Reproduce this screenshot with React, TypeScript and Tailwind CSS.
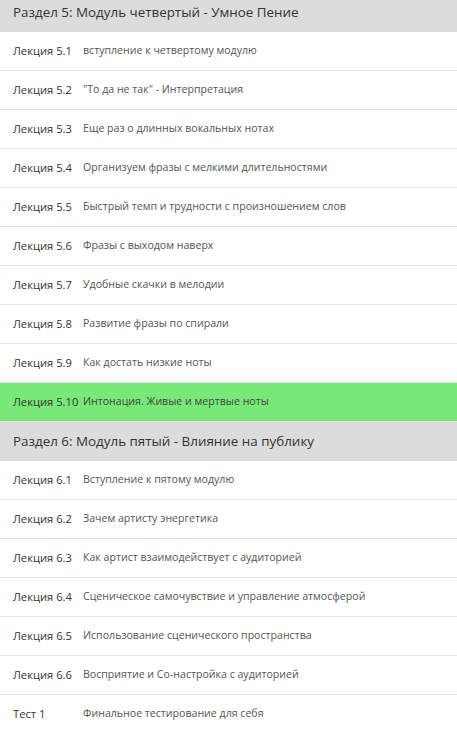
import React from 'react';

type Lesson = { label: string; title: string; active?: boolean };
type Section = { title: string; lessons: Lesson[] };

const sections: Section[] = [
  {
    title: 'Раздел 5: Модуль четвертый - Умное Пение',
    lessons: [
      { label: 'Лекция 5.1', title: 'вступление к четвертому модулю' },
      { label: 'Лекция 5.2', title: '"То да не так" - Интерпретация' },
      { label: 'Лекция 5.3', title: 'Еще раз о длинных вокальных нотах' },
      { label: 'Лекция 5.4', title: 'Организуем фразы с мелкими длительностями' },
      { label: 'Лекция 5.5', title: 'Быстрый темп и трудности с произношением слов' },
      { label: 'Лекция 5.6', title: 'Фразы с выходом наверх' },
      { label: 'Лекция 5.7', title: 'Удобные скачки в мелодии' },
      { label: 'Лекция 5.8', title: 'Развитие фразы по спирали' },
      { label: 'Лекция 5.9', title: 'Как достать низкие ноты' },
      { label: 'Лекция 5.10', title: 'Интонация. Живые и мертвые ноты', active: true },
    ],
  },
  {
    title: 'Раздел 6: Модуль пятый - Влияние на публику',
    lessons: [
      { label: 'Лекция 6.1', title: 'Вступление к пятому модулю' },
      { label: 'Лекция 6.2', title: 'Зачем артисту энергетика' },
      { label: 'Лекция 6.3', title: 'Как артист взаимодействует с аудиторией' },
      { label: 'Лекция 6.4', title: 'Сценическое самочувствие и управление атмосферой' },
      { label: 'Лекция 6.5', title: 'Использование сценического пространства' },
      { label: 'Лекция 6.6', title: 'Восприятие и Со-настройка с аудиторией' },
      { label: 'Тест 1', title: 'Финальное тестирование для себя' },
    ],
  },
];

export default function App() {
  return (
    <div className="w-[457px] h-[730px] overflow-hidden bg-white" style={{ fontFamily: '"Open Sans", "Noto Sans", sans-serif' }}>
      <div className="-mt-[7px]">
        {sections.map((s) => (
          <div key={s.title}>
            <div className="h-[39px] bg-[#dcdcdc] flex items-center px-[13px] text-[13.4px] text-[#333]">
              {s.title}
            </div>
            {s.lessons.map((l) => (
              <div
                key={l.label}
                className={`h-[39px] flex items-center px-[13px] border-b border-[#e2e2e2] ${l.active ? 'bg-[#78e978] border-[#78e978]' : 'bg-white'}`}
              >
                <span className="w-[70px] shrink-0 text-[11.2px] text-[#333]">{l.label}</span>
                <span className={`text-[10.6px] ${l.active ? 'text-[#444]' : 'text-[#555]'}`}>{l.title}</span>
              </div>
            ))}
          </div>
        ))}
      </div>
    </div>
  );
}
